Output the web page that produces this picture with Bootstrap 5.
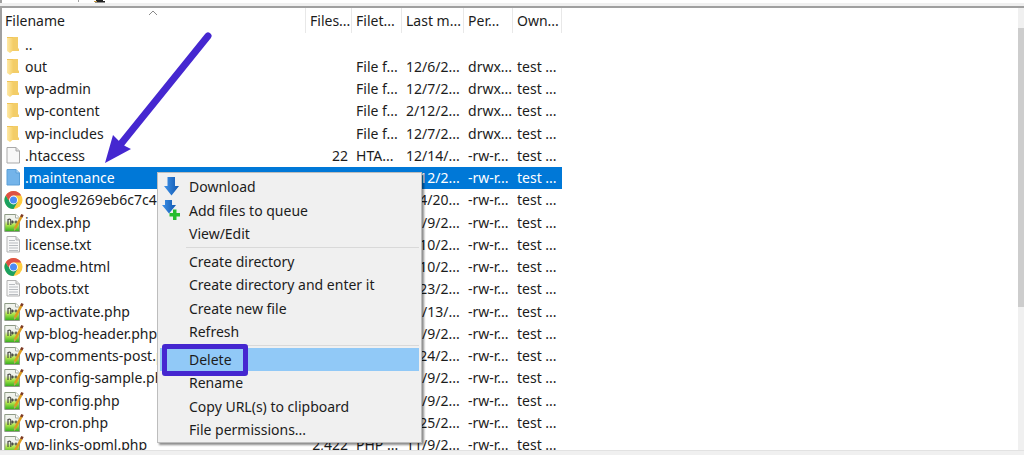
<!DOCTYPE html>
<html lang="en">
<head>
<meta charset="utf-8">
<meta name="viewport" content="width=device-width, initial-scale=1">
<title>Remote site files</title>
<link href="https://cdn.jsdelivr.net/npm/bootstrap@5.3.0/dist/css/bootstrap.min.css" rel="stylesheet">
<style>
  body { font-family: "Noto Sans", "Open Sans", sans-serif; font-size: 14px; line-height: 20px; color: #1c1c1c; background: #fff; }
  .top-edge { height: 3px; border-left: 2px solid #a0a0a0; }
  .splitter { height: 3px; background: #f0f0f0; }
  .pane { border-top: 2px solid #a0a0a0; border-left: 2px solid #a0a0a0; min-height: 0; }
  .status { height: 5px; background: #f0f0f0; border-top: 1px solid #e2e2e2; }
  .scroll-track { width: 6px; background: #f0f0f0; padding-top: 20px; }
  .scroll-thumb { height: 66%; background: #cdcdcd; }
  .files { table-layout: fixed; width: 560px; border-collapse: separate; border-spacing: 0; }
  .files th { height: 25px; font-weight: 400; padding: 0 0 0 4px; border-right: 1px solid #e8e8e8; }
  .files th:first-child { padding-left: 3px; }
  .files th, .files td { white-space: nowrap; overflow: hidden; }
  .files td { height: 22px; padding: 0 0 0 4px; }
  .files tbody tr:nth-child(4n+1) td { height: 23px; }
  .files td:first-child { padding: 0 0 0 2px; }
  .files td:nth-child(2) { padding-left: 1px; }
  .files .size { text-align: right; padding-right: 4px; }
  .files svg { display: block; }
  .files .picked td:not(:first-child) { background: #0078d7; color: #fff; }
  .sort-mark { top: 2px; left: 146px; }
  .ctx { top: 172px; left: 157px; width: 265px; padding: 2px 2px 0; background: #f0f0f0; border: 1px solid #bdbdbd; box-shadow: 2px 2px 2px rgba(0,0,0,.45); }
  .ctx button { height: 24px; width: 100%; border: 0; background: none; color: inherit; text-align: left; padding: 0; }
  .ctx button:nth-of-type(even) { height: 23px; }
  .ctx button.hot { background: #91c9f7; }
  .ctx .slot { width: 29px; flex: none; }
  .ctx hr { margin: 1px 0 2px 26px; border-top: 1px solid #d9d9d9; opacity: 1; }
  .ring { left: 2px; top: -4px; width: 86px; height: 32px; border: 5px solid #4527d0; border-radius: 3px; }
  .arrow { left: 100px; top: 30px; pointer-events: none; }
</style>
</head>
<body class="vh-100 overflow-hidden d-flex flex-column position-relative">
<svg width="0" height="0" class="position-absolute" aria-hidden="true">
  <defs>
    <linearGradient id="gf" x1="0" x2="1"><stop offset="0" stop-color="#ffe9a6"/><stop offset="1" stop-color="#f5cf67"/></linearGradient>
    <linearGradient id="gn" x1="0" y1="0" x2="0" y2="1"><stop offset=".35" stop-color="#f0f3ec"/><stop offset=".6" stop-color="#b4e84e"/><stop offset="1" stop-color="#2fae1c"/></linearGradient>
    <linearGradient id="gb" x1="0" x2="1"><stop offset="0" stop-color="#3f92e8"/><stop offset="1" stop-color="#0f57b0"/></linearGradient>
  </defs>
  <symbol id="folder" viewBox="0 0 20 20">
    <path d="M6 2h8v11.500h1V16H6z" fill="#f3cd68"/><path d="M3 2h4l2 1.500v12L6 18l-3-2z" fill="url(#gf)"/><path d="M3 2h6v1H3z" fill="#f0c55a"/>
  </symbol>
  <symbol id="blank" viewBox="0 0 20 20">
    <path d="M3 1.500h9l3.500 3.500v12H3z" fill="#f8f8f8" stroke="#a9a9a9"/><path d="M12 1.500V5h3.500" fill="#ddd" stroke="#a9a9a9"/>
  </symbol>
  <symbol id="bluefile" viewBox="0 0 20 20">
    <path d="M3 1.500h9l3.500 3.500v12H3z" fill="#74b4ea" stroke="#5a9fd8"/><path d="M12 1.500V5h3.500" fill="#a9d2f5" stroke="#5a9fd8"/>
  </symbol>
  <symbol id="txt" viewBox="0 0 20 20">
    <path d="M3 1.500h9l3.500 3.500v12H3z" fill="#f8f8f8" stroke="#b3b3b3"/><path d="M12 1.500V5h3.500" fill="#ddd" stroke="#b3b3b3"/><path d="M5 5.500h6M5 8h9M5 10.500h9M5 13h9M5 15.500h9" stroke="#b9bcc0"/>
  </symbol>
  <symbol id="chrome" viewBox="0 0 20 20">
    <circle cx="9.500" cy="10" r="9" fill="#ffcd41"/>
    <path d="M9.500 5.500h7.800A9 9 0 0 0 1.700 5.500L5.600 12.200z" fill="#de5145"/>
    <path d="M1.700 5.500A9 9 0 0 0 9.500 19l3.900-6.800L9.500 10H4.300z" fill="#1ba160"/>
    <circle cx="9.500" cy="10" r="4.400" fill="#fff"/><circle cx="9.500" cy="10" r="3.500" fill="#4c8bf5"/>
  </symbol>
  <symbol id="npp" viewBox="0 0 20 20">
    <path d="M.8 1.500h11l3.700 3.500v13.500H.8z" fill="url(#gn)" stroke="#8d9a85"/><path d="M11.500 1.500V5h4" fill="#fff" stroke="#a5aba0"/>
    <path d="M4 12V6.500q2.800-1 2.800 1V12M7 9h3M8.500 7.500v3M10.500 9h3M12 7.500v3" fill="none" stroke="#4b4b46" stroke-width="1.200"/>
    <path d="M11 15.500L17.800 3" stroke="#dd9d20" stroke-width="2.600"/><path d="M17.300 4L18.500 1.500" stroke="#7d3b27" stroke-width="2.600"/><path d="M10 18l-.1-3.100 2.300 1.200z" fill="#c5a16a"/>
  </symbol>
</svg>

<div class="top-edge flex-shrink-0 d-flex" aria-hidden="true">
  <svg width="120" height="3"><path d="M76.500 0v2" stroke="#a0a0a0"/><path d="M94 0h7v1h2v1.500H93V1h1z" fill="#222"/><path d="M92 1h3v1h-3z" fill="#c79b45"/></svg>
</div>
<div class="splitter flex-shrink-0"></div>

<main class="pane flex-fill d-flex position-relative">
  <div class="flex-fill overflow-hidden position-relative">
    <svg class="sort-mark position-absolute" width="10" height="6" aria-hidden="true"><path d="M1 5l4-4 4 4" fill="none" stroke="#8a8a8a"/></svg>
    <table class="files">
      <colgroup><col style="width:22px"><col style="width:282px"><col style="width:46px"><col style="width:50px"><col style="width:62px"><col style="width:49px"><col style="width:49px"></colgroup>
      <thead><tr><th colspan="2">Filename</th><th>Files...</th><th>Filet...</th><th>Last m...</th><th>Per...</th><th>Own...</th></tr></thead>
      <tbody>
        <tr><td><svg width="20" height="20"><use href="#folder"/></svg></td><td>..</td><td></td><td></td><td></td><td></td><td></td></tr>
        <tr><td><svg width="20" height="20"><use href="#folder"/></svg></td><td>out</td><td></td><td>File f...</td><td>12/6/2...</td><td>drwx...</td><td>test ...</td></tr>
        <tr><td><svg width="20" height="20"><use href="#folder"/></svg></td><td>wp-admin</td><td></td><td>File f...</td><td>12/7/2...</td><td>drwx...</td><td>test ...</td></tr>
        <tr><td><svg width="20" height="20"><use href="#folder"/></svg></td><td>wp-content</td><td></td><td>File f...</td><td>2/12/2...</td><td>drwx...</td><td>test ...</td></tr>
        <tr><td><svg width="20" height="20"><use href="#folder"/></svg></td><td>wp-includes</td><td></td><td>File f...</td><td>12/7/2...</td><td>drwx...</td><td>test ...</td></tr>
        <tr><td><svg width="20" height="20"><use href="#blank"/></svg></td><td>.htaccess</td><td class="size">22</td><td>HTA...</td><td>12/14/...</td><td>-rw-r...</td><td>test ...</td></tr>
        <tr class="picked"><td><svg width="20" height="20"><use href="#bluefile"/></svg></td><td>.maintenance</td><td></td><td></td><td>2/12/2...</td><td>-rw-r...</td><td>test ...</td></tr>
        <tr><td><svg width="20" height="20"><use href="#chrome"/></svg></td><td>google9269eb6c7c4</td><td></td><td></td><td>1/4/20...</td><td>-rw-r...</td><td>test ...</td></tr>
        <tr><td><svg width="20" height="20"><use href="#npp"/></svg></td><td>index.php</td><td></td><td></td><td>11/9/2...</td><td>-rw-r...</td><td>test ...</td></tr>
        <tr><td><svg width="20" height="20"><use href="#txt"/></svg></td><td>license.txt</td><td></td><td></td><td>1/10/2...</td><td>-rw-r...</td><td>test ...</td></tr>
        <tr><td><svg width="20" height="20"><use href="#chrome"/></svg></td><td>readme.html</td><td></td><td></td><td>1/10/2...</td><td>-rw-r...</td><td>test ...</td></tr>
        <tr><td><svg width="20" height="20"><use href="#txt"/></svg></td><td>robots.txt</td><td></td><td></td><td>1/23/2...</td><td>-rw-r...</td><td>test ...</td></tr>
        <tr><td><svg width="20" height="20"><use href="#npp"/></svg></td><td>wp-activate.php</td><td></td><td></td><td>11/13/...</td><td>-rw-r...</td><td>test ...</td></tr>
        <tr><td><svg width="20" height="20"><use href="#npp"/></svg></td><td>wp-blog-header.php</td><td></td><td></td><td>11/9/2...</td><td>-rw-r...</td><td>test ...</td></tr>
        <tr><td><svg width="20" height="20"><use href="#npp"/></svg></td><td>wp-comments-post.php</td><td></td><td></td><td>1/24/2...</td><td>-rw-r...</td><td>test ...</td></tr>
        <tr><td><svg width="20" height="20"><use href="#npp"/></svg></td><td>wp-config-sample.php</td><td></td><td></td><td>11/9/2...</td><td>-rw-r...</td><td>test ...</td></tr>
        <tr><td><svg width="20" height="20"><use href="#npp"/></svg></td><td>wp-config.php</td><td></td><td></td><td>11/9/2...</td><td>-rw-r...</td><td>test ...</td></tr>
        <tr><td><svg width="20" height="20"><use href="#npp"/></svg></td><td>wp-cron.php</td><td></td><td></td><td>1/25/2...</td><td>-rw-r...</td><td>test ...</td></tr>
        <tr><td><svg width="20" height="20"><use href="#npp"/></svg></td><td>wp-links-opml.php</td><td class="size">2,422</td><td>PHP ...</td><td>11/9/2...</td><td>-rw-r...</td><td>test ...</td></tr>
      </tbody>
    </table>
  </div>
  <div class="scroll-track flex-shrink-0" aria-hidden="true"><div class="scroll-thumb"></div></div>
</main>
<div class="status flex-shrink-0"></div>

<div class="ctx position-absolute" role="menu">
  <button type="button" role="menuitem" class="d-flex align-items-center"><span class="slot"><svg class="d-block" width="22" height="22"><path d="M7.500 1h7.500v9h4L11.500 19.500 4 10h3.500z" fill="url(#gb)"/></svg></span>Download</button>
  <button type="button" role="menuitem" class="d-flex align-items-center"><span class="slot"><svg class="d-block" width="22" height="22"><path d="M5 0h7v5h4L9 13.500 2 5h3z" fill="url(#gb)"/><path d="M13 9.500h3.500V13H20v3.500h-3.500V20H13v-3.500H9.500V13H13z" fill="#27bd2e"/></svg></span>Add files to queue</button>
  <button type="button" role="menuitem" class="d-flex align-items-center"><span class="slot"></span>View/Edit</button>
  <hr>
  <button type="button" role="menuitem" class="d-flex align-items-center"><span class="slot"></span>Create directory</button>
  <button type="button" role="menuitem" class="d-flex align-items-center"><span class="slot"></span>Create directory and enter it</button>
  <button type="button" role="menuitem" class="d-flex align-items-center"><span class="slot"></span>Create new file</button>
  <button type="button" role="menuitem" class="d-flex align-items-center"><span class="slot"></span>Refresh</button>
  <hr>
  <button type="button" role="menuitem" class="hot d-flex align-items-center position-relative"><span class="ring position-absolute"></span><span class="slot"></span>Delete</button>
  <button type="button" role="menuitem" class="d-flex align-items-center"><span class="slot"></span>Rename</button>
  <button type="button" role="menuitem" class="d-flex align-items-center"><span class="slot"></span>Copy URL(s) to clipboard</button>
  <button type="button" role="menuitem" class="d-flex align-items-center"><span class="slot"></span>File permissions...</button>
</div>

<svg class="arrow position-absolute" width="120" height="140" aria-hidden="true"><path d="M108 6L20 115" stroke="#4527d0" stroke-width="7" stroke-linecap="round"/><path d="M5 133l8-28 6 6 6 5 6 3z" fill="#4527d0"/></svg>
<script src="https://cdn.jsdelivr.net/npm/bootstrap@5.3.0/dist/js/bootstrap.bundle.min.js"></script>
</body>
</html>
